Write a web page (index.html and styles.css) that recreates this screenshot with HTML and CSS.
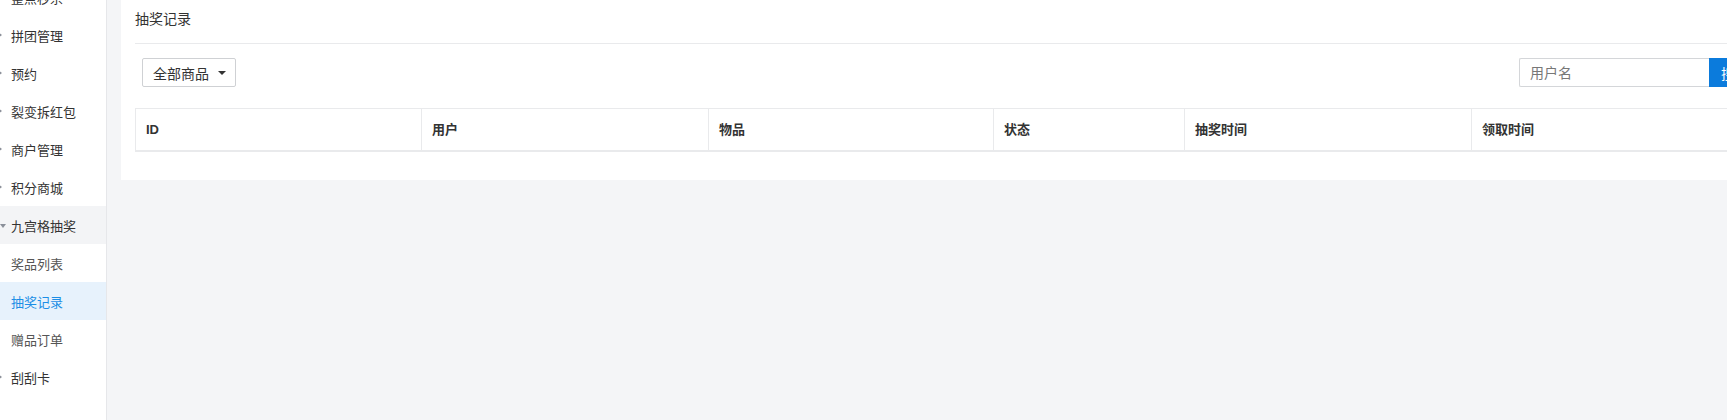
FILE: index.html
```html
<!DOCTYPE html>
<html lang="zh">
<head>
<meta charset="utf-8">
<title>抽奖记录</title>
<link rel="stylesheet" href="styles.css">
</head>
<body>
<div class="layout">
  <aside class="sidebar">
    <ul class="menu">
      <li class="item"><span class="arrow"></span>整点秒杀</li>
      <li class="item"><span class="arrow"></span>拼团管理</li>
      <li class="item"><span class="arrow"></span>预约</li>
      <li class="item"><span class="arrow"></span>裂变拆红包</li>
      <li class="item"><span class="arrow"></span>商户管理</li>
      <li class="item"><span class="arrow"></span>积分商城</li>
      <li class="item open"><span class="arrow down"></span>九宫格抽奖</li>
      <li class="item sub">奖品列表</li>
      <li class="item sub active">抽奖记录</li>
      <li class="item sub">赠品订单</li>
      <li class="item"><span class="arrow"></span>刮刮卡</li>
    </ul>
  </aside>
  <main class="main">
    <section class="panel">
      <div class="panel-title">抽奖记录</div>
      <div class="toolbar">
        <button class="dropdown">全部商品<span class="caret"></span></button>
        <div class="search">
          <input class="search-input" type="text" placeholder="用户名">
          <button class="search-btn">搜索</button>
        </div>
      </div>
      <div class="table">
        <div class="th">ID</div>
        <div class="th">用户</div>
        <div class="th">物品</div>
        <div class="th">状态</div>
        <div class="th">抽奖时间</div>
        <div class="th">领取时间</div>
      </div>
    </section>
  </main>
</div>
</body>
</html>
```
FILE: styles.css
```css
* { box-sizing: border-box; }
html, body {
  margin: 0;
  padding: 0;
  overflow: hidden;
  width: 1727px;
  height: 420px;
  background: #f4f5f7;
  font-family: "Liberation Sans", "Noto Sans CJK SC", sans-serif;
  color: #333;
}
.layout {
  display: flex;
  width: 1800px;
  height: 420px;
}
.sidebar {
  flex: none;
  width: 107px;
  height: 420px;
  background: #fff;
  border-right: 1px solid #e6e7ea;
}
.menu {
  list-style: none;
  margin: -22px 0 0 0;
  padding: 0;
}
.item {
  display: flex;
  align-items: center;
  height: 38px;
  font-size: 13px;
  color: #333;
  padding-left: 11px;
  position: relative;
}
.item.sub { color: #555; }
.item.open { background: #f3f4f6; }
.item.active {
  background: #e7f2fc;
  color: #1b8ee6;
}
.arrow {
  position: absolute;
  left: -2px;
  top: 50%;
  margin-top: -3px;
  width: 0;
  height: 0;
  border-top: 3px solid transparent;
  border-bottom: 3px solid transparent;
  border-left: 4px solid #8a8f99;
}
.arrow.down {
  left: 0;
  margin-top: -1px;
  border-left: 3px solid transparent;
  border-right: 3px solid transparent;
  border-top: 4px solid #8a8f99;
  border-bottom: 0;
}
.main {
  flex: none;
  padding-left: 14px;
}
.panel {
  width: 1654px;
  background: #fff;
  padding: 0 14px 28px 14px;
}
.panel-title {
  height: 44px;
  line-height: 38px;
  font-size: 14px;
  color: #333;
  border-bottom: 1px solid #e9eaec;
}
.toolbar {
  display: flex;
  justify-content: space-between;
  align-items: center;
  margin-top: 14px;
  padding-left: 7px;
  height: 29px;
}
.dropdown {
  display: flex;
  align-items: center;
  height: 29px;
  width: 94px;
  padding: 0 0 0 10px;
  background: #fff;
  border: 1px solid #cfd1d4;
  border-radius: 2px;
  font-family: inherit;
  font-size: 14px;
  color: #333;
}
.caret {
  width: 0;
  height: 0;
  margin-left: 9px;
  border-left: 4px solid transparent;
  border-right: 4px solid transparent;
  border-top: 4px solid #333;
}
.search {
  display: flex;
  height: 29px;
}
.search-input {
  width: 190px;
  height: 29px;
  border: 1px solid #d4d6d9;
  border-right: 0;
  border-radius: 2px 0 0 2px;
  padding: 0 10px;
  font-family: inherit;
  font-size: 14px;
  outline: none;
}
.search-input::placeholder { color: #777; }
.search-btn {
  width: 52px;
  height: 29px;
  border: 0;
  background: #0b7bdc;
  color: #fff;
  font-family: inherit;
  font-size: 14px;
  padding: 0 10px;
}
.table {
  display: grid;
  grid-template-columns: 286px 287px 285px 191px 287px 1fr;
  margin-top: 21px;
  border-top: 1px solid #e9eaec;
  border-left: 1px solid #e9eaec;
  border-bottom: 2px solid #e9eaec;
}
.th {
  height: 41px;
  line-height: 41px;
  padding-left: 10px;
  font-size: 13px;
  font-weight: bold;
  color: #333;
  border-right: 1px solid #e9eaec;
}
```
